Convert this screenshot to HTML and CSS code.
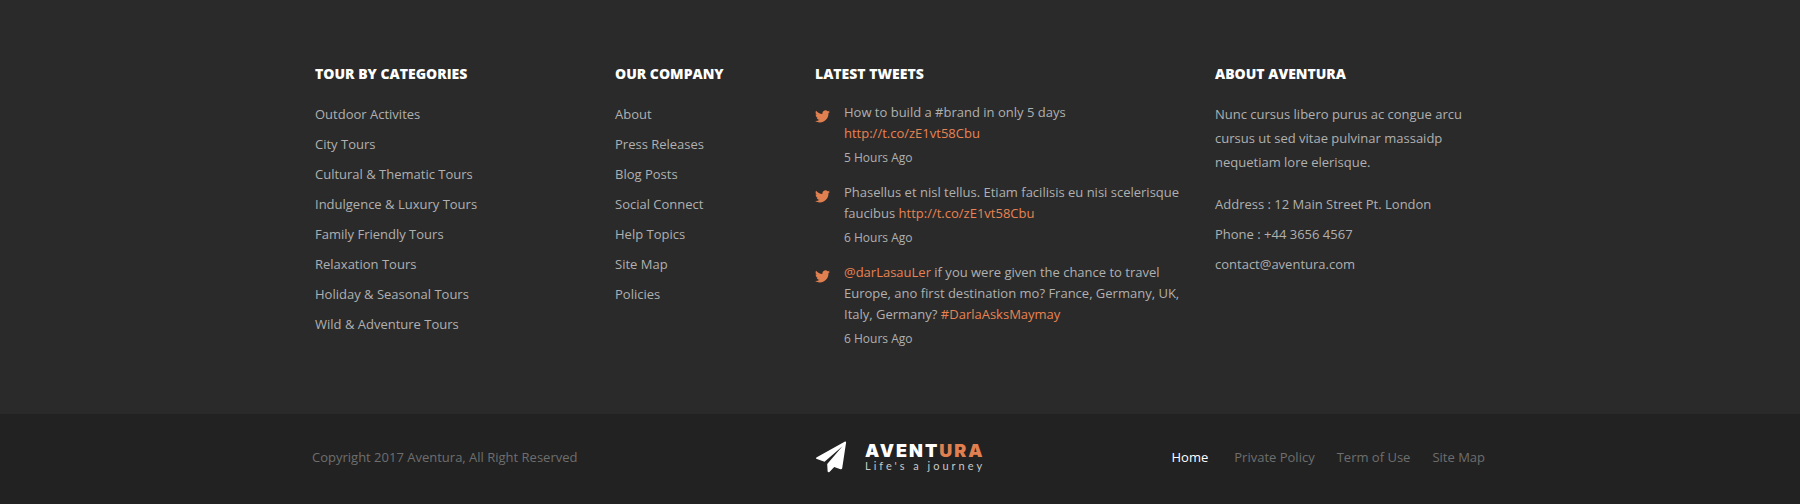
FILE: index.html
```html
<!DOCTYPE html>
<html lang="en">
<head>
<meta charset="utf-8">
<meta name="viewport" content="width=device-width, initial-scale=1">
<title>Aventura</title>
<link rel="stylesheet" href="styles.css">
</head>
<body>
<svg width="0" height="0" class="sprite" aria-hidden="true">
  <symbol id="bird" viewBox="0 0 24 20">
    <path d="M24 2.4c-.9.4-1.8.7-2.8.8 1-.6 1.800-1.600 2.200-2.700-.9.6-2 1-3.100 1.200A4.900 4.900 0 0 0 11.900 6.100C7.700 5.900 4.100 3.900 1.700.9.300 3.100 1 6.100 3.200 7.500c-.8 0-1.600-.2-2.200-.6v.1c0 2.400 1.700 4.400 3.900 4.800-.7.200-1.500.2-2.200.1.600 2 2.400 3.400 4.600 3.400A9.900 9.900 0 0 1 0 17.300a14 14 0 0 0 21.500-12.400c1-.7 1.800-1.600 2.500-2.500z"/>
  </symbol>
</svg>
<footer>
  <div class="footer-main">
    <div class="container columns">
      <nav class="column" aria-labelledby="categories">
        <h2 id="categories">TOUR BY CATEGORIES</h2>
        <ul class="links">
          <li><a href="#">Outdoor Activites</a></li>
          <li><a href="#">City Tours</a></li>
          <li><a href="#">Cultural &amp; Thematic Tours</a></li>
          <li><a href="#">Indulgence &amp; Luxury Tours</a></li>
          <li><a href="#">Family Friendly Tours</a></li>
          <li><a href="#">Relaxation Tours</a></li>
          <li><a href="#">Holiday &amp; Seasonal Tours</a></li>
          <li><a href="#">Wild &amp; Adventure Tours</a></li>
        </ul>
      </nav>
      <nav class="column" aria-labelledby="company">
        <h2 id="company">OUR COMPANY</h2>
        <ul class="links">
          <li><a href="#">About</a></li>
          <li><a href="#">Press Releases</a></li>
          <li><a href="#">Blog Posts</a></li>
          <li><a href="#">Social Connect</a></li>
          <li><a href="#">Help Topics</a></li>
          <li><a href="#">Site Map</a></li>
          <li><a href="#">Policies</a></li>
        </ul>
      </nav>
      <section class="column">
        <h2>LATEST TWEETS</h2>
        <ul class="tweets">
          <li class="tweet">
            <svg class="bird" aria-hidden="true"><use href="#bird"/></svg>
            <div>
              <p>How to build a #brand in only 5 days<br><a href="#">http://t.co/zE1vt58Cbu</a></p>
              <span class="time">5 Hours Ago</span>
            </div>
          </li>
          <li class="tweet">
            <svg class="bird" aria-hidden="true"><use href="#bird"/></svg>
            <div>
              <p>Phasellus et nisl tellus. Etiam facilisis eu nisi scelerisque faucibus <a href="#">http://t.co/zE1vt58Cbu</a></p>
              <span class="time">6 Hours Ago</span>
            </div>
          </li>
          <li class="tweet">
            <svg class="bird" aria-hidden="true"><use href="#bird"/></svg>
            <div>
              <p><a href="#">@darLasauLer</a> if you were given the chance to travel Europe, ano first destination mo? France, Germany, UK, Italy, Germany? <a href="#">#DarlaAsksMaymay</a></p>
              <span class="time">6 Hours Ago</span>
            </div>
          </li>
        </ul>
      </section>
      <section class="column">
        <h2>ABOUT AVENTURA</h2>
        <p class="about">Nunc cursus libero purus ac congue arcu cursus ut sed vitae pulvinar massaidp nequetiam lore elerisque.</p>
        <ul class="links">
          <li>Address : 12 Main Street Pt. London</li>
          <li>Phone : +44 3656 4567</li>
          <li><a href="#">contact@aventura.com</a></li>
        </ul>
      </section>
    </div>
  </div>
  <div class="footer-bar">
    <div class="container bar">
      <p class="copyright">Copyright 2017 Aventura, All Right Reserved</p>
      <a class="logo" href="#">
        <svg class="plane" viewBox="0 0 31 32" aria-hidden="true">
          <path d="M28.600.7c.9-.5 1.600-.1 1.500.9L26.200 27.200c-.2 1-.9 1.300-1.700 1l-6.300-2.300-4.500 4.800c-1 1-2 .7-2.100-.6l-.4-7.200L26.500 5.200 8.500 20.800.9 18c-1.200-.5-1.200-1.200-.1-1.800z"/>
        </svg>
        <span class="wordmark">
          <span class="name">AVENT<span class="accent">URA</span></span>
          <span class="tagline">Life's a journey</span>
        </span>
      </a>
      <nav class="bar-links" aria-label="Footer">
        <a class="current" href="#">Home</a>
        <a href="#">Private Policy</a>
        <a href="#">Term of Use</a>
        <a href="#">Site Map</a>
      </nav>
    </div>
  </div>
</footer>
</body>
</html>
```
FILE: styles.css
```css
* {
  box-sizing: border-box;
}

body {
  margin: 0;
  background: #222;
  color: #b0b0b0;
  font: 13px/20px "Open Sans", "Noto Sans", sans-serif;
}

h2,
p,
ul {
  margin: 0;
  padding: 0;
}

ul {
  list-style: none;
}

a {
  color: inherit;
  text-decoration: none;
}

.sprite {
  position: absolute;
}

.container {
  max-width: 1200px;
  margin: 0 auto;
}

.footer-main {
  padding: 64px 0 65px;
  background: #2a2a2a;
}

.columns {
  display: grid;
  grid-template-columns: 3fr 2fr 4fr 3fr;
}

.column {
  padding: 0 15px;
}

h2 {
  color: #fff;
  font-size: 14px;
  font-weight: 800;
  line-height: 20px;
}

.links {
  margin-top: 15px;
  line-height: 30px;
}

.tweets {
  display: grid;
  gap: 14px;
  margin-top: 18px;
  line-height: 21px;
}

.tweet {
  display: flex;
  gap: 14px;
}

.tweet a {
  color: #e88353;
}

.bird {
  flex: none;
  width: 15px;
  height: 13px;
  margin-top: 8px;
  fill: #e08050;
}

.time {
  display: block;
  margin-top: 3px;
  font-size: 12px;
}

.about {
  margin-top: 18px;
  line-height: 24px;
}

.footer-bar {
  padding: 27px 0 31px;
  background: #222;
}

.bar {
  display: grid;
  grid-template-columns: 5fr 2fr 5fr;
  align-items: center;
  color: #6e6e6e;
}

.copyright {
  padding-left: 12px;
}

.logo {
  display: flex;
  gap: 18px;
  align-items: center;
  padding-left: 16px;
  white-space: nowrap;
}

.plane {
  flex: none;
  width: 31px;
  height: 32px;
  fill: #fff;
}

.wordmark {
  display: grid;
  padding-top: 2px;
}

.name {
  color: #fff;
  font: 900 18px/16px Inter, sans-serif;
  letter-spacing: 2px;
}

.accent {
  color: #e08050;
}

.tagline {
  color: #c8c8c8;
  font: 11px/14px Lato, sans-serif;
  letter-spacing: 3px;
}

.bar-links {
  display: flex;
  gap: 22px;
  justify-content: flex-end;
  padding-right: 15px;
}

.current {
  margin-right: 4px;
  color: #fff;
  font-weight: 500;
}
```
